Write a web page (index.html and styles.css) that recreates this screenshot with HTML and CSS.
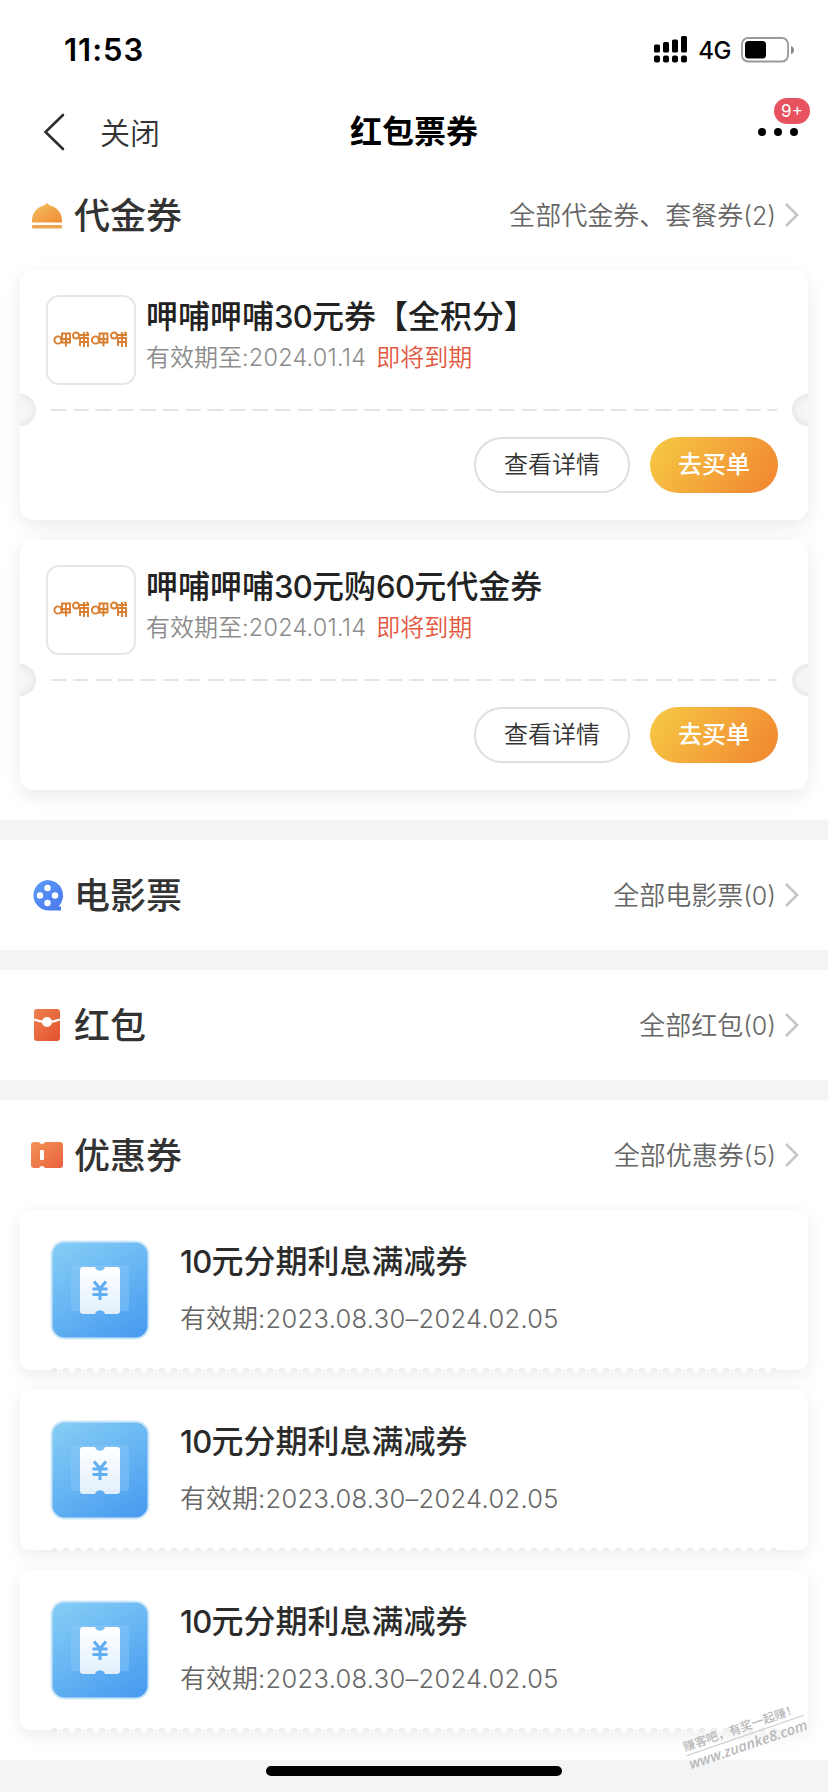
FILE: index.html
```html
<!DOCTYPE html>
<html lang="zh-CN">
<head>
<meta charset="utf-8">
<title>红包票券</title>
<link rel="stylesheet" href="styles.css">
</head>
<body>
<svg width="0" height="0" class="defs">
  <defs>
    <linearGradient id="gold" x1="0" y1="0" x2="1" y2="1"><stop offset="0" stop-color="#f3c163"/><stop offset="1" stop-color="#f18a33"/></linearGradient>
    <linearGradient id="blue" x1="0" y1="0" x2="1" y2="1"><stop offset="0" stop-color="#5b9bf5"/><stop offset="1" stop-color="#4a78ee"/></linearGradient>
    <linearGradient id="red" x1="0" y1="0" x2="1" y2="1"><stop offset="0" stop-color="#ee8150"/><stop offset="1" stop-color="#e2522c"/></linearGradient>
    <linearGradient id="orange" x1="0" y1="0" x2="1" y2="1"><stop offset="0" stop-color="#f29457"/><stop offset="1" stop-color="#e9603e"/></linearGradient>
    <linearGradient id="sky" x1="0.2" y1="0" x2="0.8" y2="1"><stop offset="0" stop-color="#82cbf5"/><stop offset="1" stop-color="#4a9df0"/></linearGradient>
    <linearGradient id="paper" x1="0" y1="0" x2="0" y2="1"><stop offset="0" stop-color="#fff"/><stop offset="1" stop-color="#e1effc"/></linearGradient>
    <pattern id="scallop" width="12" height="6" patternUnits="userSpaceOnUse"><path d="M0 5V3a3 2.500 0 0 1 6 0V5z" fill="#eee"/><rect x="6" y="3.500" width="6" height="2.500" fill="#fafafa"/></pattern>
    <symbol id="coupon" viewBox="0 0 100 100">
      <rect x="1.5" y="1.5" width="97" height="97" rx="13" fill="url(#sky)" stroke="#cde7fa" stroke-width="2"/>
      <rect x="21" y="25" width="58" height="46" rx="3" fill="#8fcbf7" opacity=".4"/>
      <path d="M33 27H45a5.2 5.2 0 0 0 10 0H67a3 3 0 0 1 3 3V71a3 3 0 0 1-3 3H55a5.2 5.2 0 0 0-10 0H33a3 3 0 0 1-3-3V30a3 3 0 0 1 3-3z" fill="url(#paper)"/>
      <path d="M44 41.500l6 7 6-7M42.500 49h15M42.500 54.500h15M50 48.500V60" fill="none" stroke="#61aef0" stroke-width="3.100"/>
    </symbol>
    <symbol id="arrow" viewBox="0 0 16 26"><path d="M2 2l11 11L2 24" fill="none" stroke="#c6c6c6" stroke-width="2.600"/></symbol>
    <symbol id="brand" viewBox="0 0 76 18">
      <g fill="none" stroke="#d87f32" stroke-width="1.900">
        <circle cx="5" cy="9" r="3.600"/><path d="M7 8h11M9 2.500h8v9h-8zM13 2.500v13"/>
        <circle cx="23" cy="4.500" r="3"/><path d="M26 4h10M31 1v15M27 15V7h8v9M27 11h8M33.500 1l2 2"/>
        <circle cx="42.500" cy="9" r="3.600"/><path d="M44.500 8h11M46.500 2.500h8v9h-8zM50.500 2.500v13"/>
        <circle cx="61" cy="4.500" r="3"/><path d="M64 4h10M69 1v15M65 15V7h8v9M65 11h8M71.500 1l2 2"/>
      </g>
    </symbol>
  </defs>
</svg>
<div class="screen">
  <header class="status">
    <span class="clock">11:53</span>
    <div class="signals">
      <svg width="34" height="28" viewBox="0 0 34 28">
        <rect x="0" y="8.500" width="6" height="8" rx="1.500"/><rect x="9" y="6" width="6" height="10.500" rx="1.500"/><rect x="18" y="3.500" width="6" height="13" rx="1.500"/><rect x="27" y="0" width="6" height="16.500" rx="1.500"/>
        <rect x="0" y="19.500" width="6" height="7" rx="2"/><rect x="9" y="19.500" width="6" height="7" rx="2"/><rect x="18" y="19.500" width="6" height="7" rx="2"/><rect x="27" y="19.500" width="6" height="7" rx="2"/>
      </svg>
      <span class="network">4G</span>
      <svg width="54" height="26" viewBox="0 0 54 26"><rect x="1" y="1" width="46" height="23.500" rx="6" fill="none" stroke="#999" stroke-width="1.800"/><rect x="4" y="4" width="21" height="17.500" rx="3.500"/><path d="M50 9q3 1 3 4t-3 4z" fill="#888"/></svg>
    </div>
  </header>
  <nav class="nav">
    <div class="nav-left">
      <svg width="22" height="38" viewBox="0 0 22 38"><path d="M20 2L2.500 19 20 36" fill="none" stroke="#2d2d2d" stroke-width="2.600" stroke-linecap="round"/></svg>
      <span>关闭</span>
    </div>
    <h1>红包票券</h1>
    <div class="more"><i></i><i></i><i></i><b class="badge">9+</b></div>
  </nav>

  <section class="vouchers">
    <div class="head">
      <svg class="head-icon" viewBox="0 0 34 34"><path d="M2 24.500C1.500 15 7 9 14 7.500L17 5 20 7.500C27 9 32.500 15 32 24.500z" fill="url(#gold)"/><rect x="2" y="27" width="30" height="3.500" rx="1" fill="#eda552"/></svg>
      <h2>代金券</h2>
      <span class="all">全部代金券、套餐券<span>(2)</span></span><svg class="arrow"><use href="#arrow"/></svg>
    </div>
    <article class="voucher">
      <div class="info">
        <div class="logo"><svg width="76" height="18"><use href="#brand"/></svg></div>
        <div><h3>呷哺呷哺<span class="n3">30</span>元券【全积分】</h3><p>有效期至<span class="date">:2024.01.14</span><em>即将到期</em></p></div>
      </div>
      <div class="cut"><svg width="726" height="2"><path d="M0 1h726" stroke="#e4e4e4" stroke-width="2" stroke-dasharray="15.400 7"/></svg></div>
      <div class="actions"><button class="detail">查看详情</button><button class="pay">去买单</button></div>
    </article>
    <article class="voucher">
      <div class="info">
        <div class="logo"><svg width="76" height="18"><use href="#brand"/></svg></div>
        <div><h3>呷哺呷哺<span class="n3">30</span>元购<span class="n3">60</span>元代金券</h3><p>有效期至<span class="date">:2024.01.14</span><em>即将到期</em></p></div>
      </div>
      <div class="cut"><svg width="726" height="2"><path d="M0 1h726" stroke="#e4e4e4" stroke-width="2" stroke-dasharray="15.400 7"/></svg></div>
      <div class="actions"><button class="detail">查看详情</button><button class="pay">去买单</button></div>
    </article>
  </section>

  <section>
    <div class="head">
      <svg class="head-icon" viewBox="0 0 34 34"><path d="M17.500 2a15.500 15.500 0 0 1 11 26.500h2.500v4H17.500a15.300 15.300 0 0 1 0-30.500z" fill="url(#blue)"/><g fill="#fff"><circle cx="17.500" cy="10" r="3.200"/><circle cx="10" cy="17.500" r="3.200"/><circle cx="25" cy="17.500" r="3.200"/><circle cx="17.500" cy="25" r="3.200"/></g></svg>
      <h2>电影票</h2><span class="all">全部电影票<span>(0)</span></span><svg class="arrow"><use href="#arrow"/></svg>
    </div>
  </section>
  <section>
    <div class="head">
      <svg class="head-icon" viewBox="0 0 34 34"><rect x="4" y="1" width="26" height="32" rx="3" fill="url(#red)"/><path d="M4 11.500q13 5 26 0" fill="none" stroke="#fff" stroke-width="2"/><circle cx="17" cy="14" r="5" fill="#fff"/></svg>
      <h2>红包</h2><span class="all">全部红包<span>(0)</span></span><svg class="arrow"><use href="#arrow"/></svg>
    </div>
  </section>
  <section class="coupons">
    <div class="head">
      <svg class="head-icon" viewBox="0 0 34 34"><path d="M4 4H9a3.200 3.200 0 0 0 6 0H30a3 3 0 0 1 3 3V27a3 3 0 0 1-3 3H15a3.200 3.200 0 0 0-6 0H4a3 3 0 0 1-3-3V7a3 3 0 0 1 3-3z" fill="url(#orange)"/><rect x="10" y="12" width="4" height="10" rx="1" fill="#fff"/></svg>
      <h2>优惠券</h2><span class="all">全部优惠券<span>(5)</span></span><svg class="arrow"><use href="#arrow"/></svg>
    </div>
    <article class="coupon"><svg class="coupon-icon"><use href="#coupon"/></svg><div><h3><span class="n3">10</span>元分期利息满减券</h3><p>有效期<span>:2023.08.30–2024.02.05</span></p></div><svg class="edge"><rect width="726" height="6" fill="url(#scallop)"/></svg></article>
    <article class="coupon"><svg class="coupon-icon"><use href="#coupon"/></svg><div><h3><span class="n3">10</span>元分期利息满减券</h3><p>有效期<span>:2023.08.30–2024.02.05</span></p></div><svg class="edge"><rect width="726" height="6" fill="url(#scallop)"/></svg></article>
    <article class="coupon"><svg class="coupon-icon"><use href="#coupon"/></svg><div><h3><span class="n3">10</span>元分期利息满减券</h3><p>有效期<span>:2023.08.30–2024.02.05</span></p></div><svg class="edge"><rect width="726" height="6" fill="url(#scallop)"/></svg></article>
  </section>
  <footer><div class="home"></div></footer>
  <div class="watermark"><span>赚客吧，有奖一起赚！</span><b>www.zuanke8.com</b></div>
</div>
</body>
</html>
```
FILE: styles.css
```css
* { box-sizing: border-box; margin: 0; padding: 0; }
body { width: 828px; background: #f3f4f6; font-family: "Noto Sans CJK SC", sans-serif; color: #333; }
svg { display: block; flex: none; }
.defs { position: absolute; }
.screen { position: relative; width: 828px; height: 1792px; overflow: hidden; display: flex; flex-direction: column; gap: 20px; }
.status, .nav { margin-bottom: -20px; }
.status { height: 100px; background: #fff; display: flex; justify-content: space-between; padding: 0 33px 0 64px; align-items: center; flex: none; }
.clock { font: 600 31px/36px Inter, sans-serif; letter-spacing: 1px; color: #000; }
.signals { display: flex; align-items: center; }
.network { font: 500 24px/30px Inter, sans-serif; color: #000; margin: 2px 10px 0 10px; letter-spacing: -0.5px; }
.nav { height: 60px; background: #fff; display: grid; grid-template-columns: 1fr auto 1fr; align-items: center; padding: 4px 28px 0; flex: none; }
.nav-left { display: flex; align-items: center; gap: 35px; margin-left: 15px; font-size: 30px; line-height: 40px; font-weight: 350; }
.nav-left span { margin-top: -2px; }
.nav h1 { font-size: 32px; line-height: 44px; font-weight: 700; color: #000; margin-top: -6px; }
.more { position: relative; justify-self: end; display: flex; gap: 8px; width: 42px; }
.more i { width: 8px; height: 8px; border-radius: 50%; background: #000; flex: none; }
.badge { position: absolute; left: 16px; top: -30px; width: 36px; height: 26px; border-radius: 13px; background: #e8525f; color: #fff; font: 400 17px/26px Inter, sans-serif; text-align: center; }
section { background: #fff; flex: none; }
.head { height: 110px; display: flex; align-items: center; padding: 0 28px 0 30px; }
.head-icon { width: 34px; height: 34px; }
.head h2 { font-size: 36px; line-height: 50px; font-weight: 500; margin: -4px 0 0 10px; flex: 1; }
.all { font-size: 26px; line-height: 38px; font-weight: 350; color: #666; }
.all span { font-family: Inter, sans-serif; font-size: 25px; }
.arrow { width: 16px; height: 26px; margin-left: 8px; }
.vouchers { height: 660px; }
.voucher { height: 250px; margin: 0 20px 20px; border-radius: 14px; background: #fff; box-shadow: 0 6px 20px rgba(0,0,0,.085); }
.info { height: 124px; padding: 25px 26px 0; display: flex; gap: 10px; }
.logo { width: 90px; height: 90px; border: 2px solid #e7e7e7; border-radius: 13px; display: flex; align-items: center; justify-content: center; flex: none; }
h3 { font-size: 32px; line-height: 42px; font-weight: 500; color: #222; white-space: nowrap; margin-top: -2px; }
.n3 { font-family: Inter, sans-serif; font-size: 31px; letter-spacing: -0.7px; }
.info p { font-size: 24px; line-height: 35px; font-weight: 350; color: #8c8c8c; }
.date { font-family: Inter, sans-serif; font-size: 23.5px; font-weight: 300; letter-spacing: 0.2px; }
.info em { font-style: normal; color: #e4583f; margin-left: 10px; }
.cut { height: 32px; position: relative; display: flex; justify-content: center; align-items: center; }
.cut::before, .cut::after { content: ""; position: absolute; top: 0; width: 16px; height: 32px; }
.cut::before { left: 0; border-radius: 0 16px 16px 0; background: radial-gradient(circle 16px at 0 50%, #f8f8f8 0, #f4f4f4 60%, #e9e9e9 100%); }
.cut::after { right: 0; border-radius: 16px 0 0 16px; background: radial-gradient(circle 16px at 100% 50%, #f8f8f8 0, #f4f4f4 60%, #e9e9e9 100%); }
.actions { display: flex; justify-content: flex-end; gap: 20px; padding: 11px 30px 0 0; }
button { height: 56px; border-radius: 28px; font: 350 24px/48px "Noto Sans CJK SC", sans-serif; color: #333; background: #fff; padding-bottom: 4px; }
.detail { width: 156px; border: 2px solid #dedede; }
.pay { width: 128px; border: 0; color: #fff; font-weight: 500; background: linear-gradient(125deg, #f6c744 5%, #f18731 95%); }
.coupons { height: 660px; }
.coupon { position: relative; height: 160px; margin: 0 20px 20px; padding: 30px 30px 0; display: flex; gap: 30px; border-radius: 10px; background: #fff; box-shadow: 0 5px 18px rgba(0,0,0,.08); }
.coupon-icon { width: 100px; height: 100px; }
.coupon p { font-size: 26px; line-height: 38px; font-weight: 350; color: #666; margin-top: 15px; }
.coupon p span { font-family: Inter, sans-serif; font-size: 25.5px; font-weight: 300; letter-spacing: 0.3px; }
.coupon h3 { color: #2b2b2b; }
.edge { position: absolute; left: 31px; bottom: -3px; width: 726px; height: 6px; }
footer { height: 32px; margin-top: -20px; padding-top: 6px; display: flex; justify-content: center; }
.home { width: 296px; height: 10px; border-radius: 5px; background: #000; }
.watermark { position: absolute; left: 683px; top: 1717px; width: 124px; transform: rotate(-19deg); color: #b9b9b9; display: flex; flex-direction: column; }
.watermark span { font-size: 12px; line-height: 18px; font-weight: 500; white-space: nowrap; border-bottom: 1px solid #c8c8c8; }
.watermark b { font: italic 600 14.500px/17px "Open Sans", sans-serif; white-space: nowrap; }
```
